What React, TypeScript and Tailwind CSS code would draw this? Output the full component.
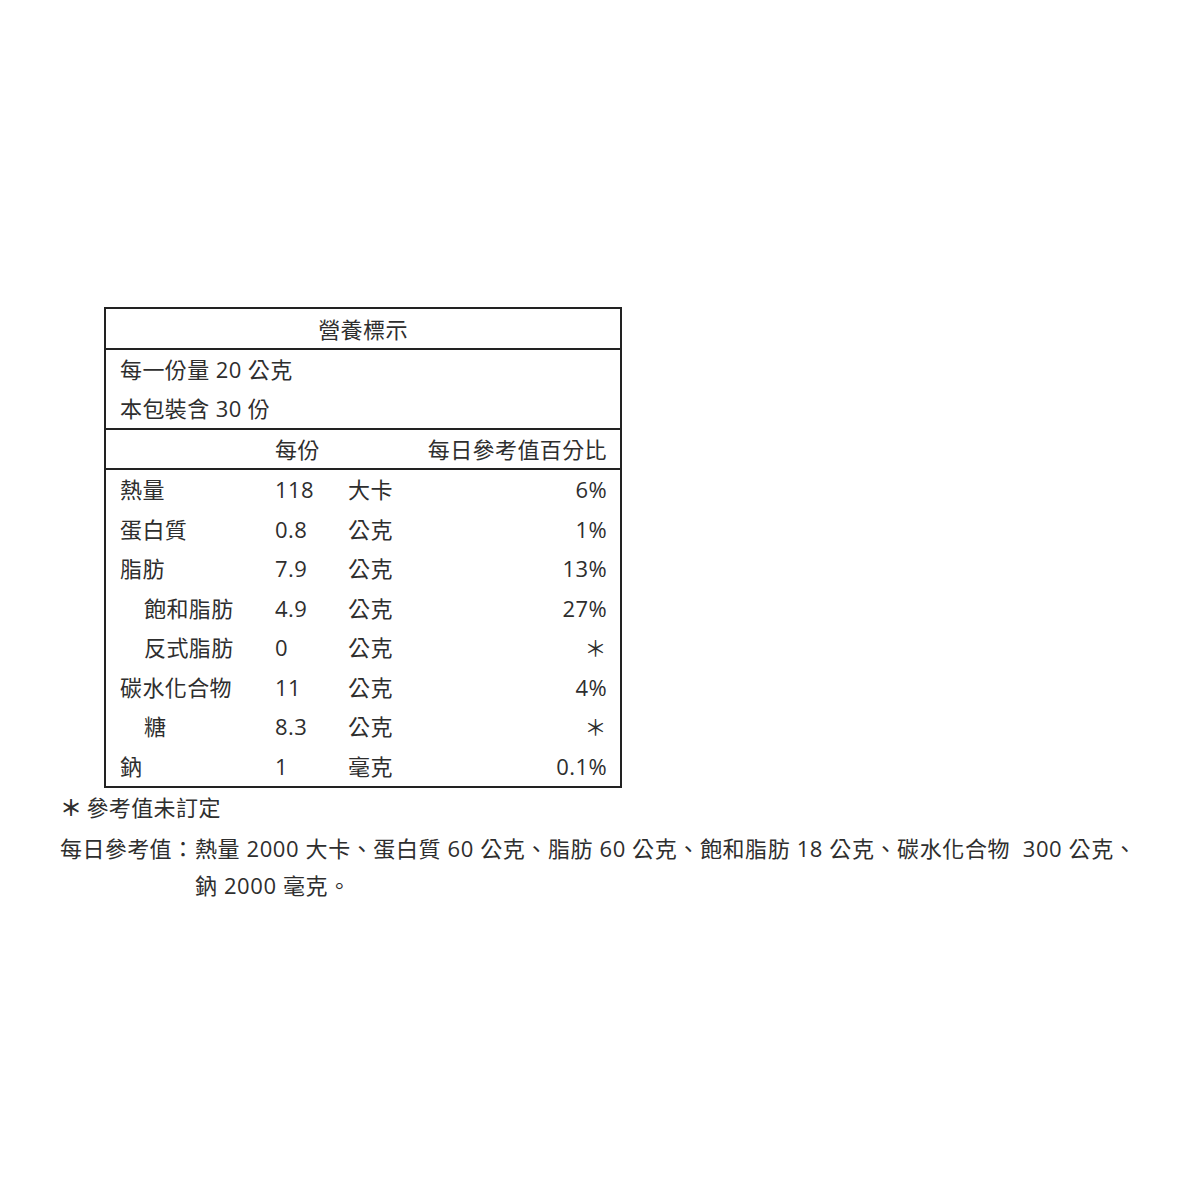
const font = { fontFamily: '"Open Sans", "Noto Sans CJK TC", sans-serif' };

type Row = { name: string; indent?: boolean; value: string; unit: string; pct: string };

const rows: Row[] = [
  { name: '熱量', value: '118', unit: '大卡', pct: '6%' },
  { name: '蛋白質', value: '0.8', unit: '公克', pct: '1%' },
  { name: '脂肪', value: '7.9', unit: '公克', pct: '13%' },
  { name: '飽和脂肪', indent: true, value: '4.9', unit: '公克', pct: '27%' },
  { name: '反式脂肪', indent: true, value: '0', unit: '公克', pct: '＊' },
  { name: '碳水化合物', value: '11', unit: '公克', pct: '4%' },
  { name: '糖', indent: true, value: '8.3', unit: '公克', pct: '＊' },
  { name: '鈉', value: '1', unit: '毫克', pct: '0.1%' },
];

export default function App() {
  return (
    <div className="w-[1200px] h-[1200px] bg-white text-[#2e2e2e] text-[22px] tracking-[0.4px]" style={font}>
      <div className="pt-[307px] pl-[104px]">
        <div className="w-[518px] border-2 border-[#222]">
          <div className="h-[39px] flex items-center justify-center leading-none">營養標示</div>
          <div className="border-t-2 border-[#222] pl-[14px]">
            <div className="h-[39px] flex items-center">每一份量 20 公克</div>
            <div className="h-[39px] flex items-center">本包裝含 30 份</div>
          </div>
          <div className="border-t-2 border-[#222] h-[40px] flex items-center pr-[13px]">
            <div className="w-[169px]" />
            <div className="w-[73px]">每份</div>
            <div className="flex-1 text-right">每日參考值百分比</div>
          </div>
          <div className="border-t-2 border-[#222]">
            {rows.map((r) => (
              <div key={r.name} className="h-[39.5px] flex items-center pr-[13px]">
                <div className={`w-[169px] ${r.indent ? 'pl-[38px]' : 'pl-[14px]'}`}>{r.name}</div>
                <div className="w-[73px]">{r.value}</div>
                <div className="w-[60px]">{r.unit}</div>
                <div className="flex-1 text-right">{r.pct}</div>
              </div>
            ))}
          </div>
        </div>
      </div>
      <div className="pl-[60px] pt-[2px]">
        <div className="h-[35px] flex items-center">
          <span className="font-bold text-[22px] mr-[4px]">＊</span>參考值未訂定
        </div>
        <div className="flex mt-[5px]">
          <div className="w-[135px] shrink-0 h-[37px] flex items-center whitespace-nowrap">每日參考值：</div>
          <div className="tracking-[0.6px]">
            <div className="h-[37px] flex items-center whitespace-nowrap">熱量 2000 大卡、蛋白質 60 公克、脂肪 60 公克、飽和脂肪 18 公克、碳水化合物&nbsp; 300 公克、</div>
            <div className="h-[37px] flex items-center">鈉 2000 毫克。</div>
          </div>
        </div>
      </div>
    </div>
  );
}
